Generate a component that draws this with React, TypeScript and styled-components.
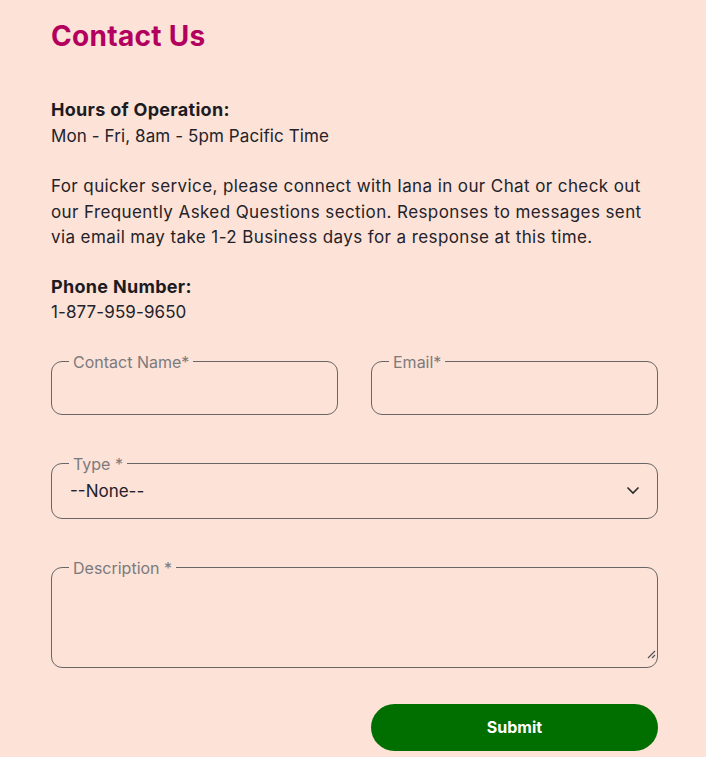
import React from "react";
import styled, { createGlobalStyle } from "styled-components";

const Global = createGlobalStyle`
  html, body { margin: 0; padding: 0; background: #fce2d7; }
  body { font-family: Inter, "Noto Sans", sans-serif; color: #1f1f23; }
`;

const Page = styled.div`
  padding: 18px 48px 8px 51px;
  width: 607px;
  background: #fce2d7;
`;

const Title = styled.h1`
  margin: 0 0 43px;
  font-size: 28px;
  line-height: 36px;
  font-weight: 700;
  color: #b3005e;
  letter-spacing: 0.3px;
`;

const Block = styled.div<{ $wide?: boolean }>`
  margin-bottom: ${(p) => (p.$wide ? "23px" : "25px")};
  font-size: 17px;
  line-height: 25.5px;
  color: #24222a;
  letter-spacing: ${(p) => (p.$wide ? "0.4px" : "0.1px")};
`;

const Heading = styled.div`
  font-weight: 700;
  font-size: 18px;
  line-height: 26.5px;
  letter-spacing: 0.3px;
  color: #1d1b22;
`;

const Form = styled.form`
  display: flex;
  flex-direction: column;
  gap: 41px;
  margin-top: 28px;
`;

const Row = styled.div`
  display: grid;
  grid-template-columns: 1fr 1fr;
  column-gap: 33px;
`;

const Field = styled.fieldset<{ $h: number }>`
  margin: 0;
  padding: 0 16px 0 17px;
  border: 1px solid #6a6666;
  border-radius: 11px;
  height: ${(p) => p.$h}px;
  box-sizing: border-box;
  position: relative;
  min-width: 0;
`;

const Legend = styled.legend`
  padding: 0 4px;
  font-size: 16px;
  line-height: 16px;
  color: #7c7a7c;
`;

const Input = styled.input`
  border: none;
  background: transparent;
  outline: none;
  width: 100%;
  height: 36px;
  font: inherit;
  font-size: 17px;
  padding: 0;
`;

const SelectBox = styled.div`
  display: flex;
  align-items: center;
  justify-content: space-between;
  height: 38px;
  font-size: 17px;
  color: #22202a;
  padding-left: 1px;
  padding-right: 1px;
`;

const TextArea = styled.div`
  height: 84px;
`;

const Grip = styled.svg`
  position: absolute;
  right: 1px;
  bottom: 1px;
`;

const ButtonRow = styled.div`
  display: grid;
  grid-template-columns: 1fr 1fr;
  column-gap: 33px;
  margin-top: -5px;
`;

const Submit = styled.button`
  grid-column: 2;
  height: 47px;
  border: none;
  border-radius: 24px;
  background: #006f00;
  color: #fff;
  font-family: Inter, sans-serif;
  font-weight: 700;
  font-size: 16px;
`;

export default function App() {
  return (
    <Page>
      <Global />
      <Title>Contact Us</Title>
      <Block>
        <Heading>Hours of Operation:</Heading>
        Mon - Fri, 8am - 5pm Pacific Time
      </Block>
      <Block $wide>
        For quicker service, please connect with Iana in our Chat or check out our Frequently Asked
        Questions section. Responses to messages sent via email may take 1-2 Business days for a
        response at this time.
      </Block>
      <Block>
        <Heading>Phone Number:</Heading>
        1-877-959-9650
      </Block>
      <Form>
        <Row>
          <Field $h={61}>
            <Legend>Contact Name*</Legend>
            <Input />
          </Field>
          <Field $h={61}>
            <Legend>Email*</Legend>
            <Input />
          </Field>
        </Row>
        <Field $h={63}>
          <Legend>Type *</Legend>
          <SelectBox>
            <span>--None--</span>
            <svg width="14" height="9" viewBox="0 0 14 9">
              <path d="M1.5 1.5 L7 7 L12.5 1.5" fill="none" stroke="#2a2a2a" strokeWidth="1.6" />
            </svg>
          </SelectBox>
        </Field>
        <Field $h={108}>
          <Legend>Description *</Legend>
          <TextArea />
          <Grip width="10" height="10" viewBox="0 0 10 10">
            <path d="M9 2 L2 9 M9 6 L6 9" stroke="#555" strokeWidth="1.2" />
          </Grip>
        </Field>
        <ButtonRow>
          <Submit type="button">Submit</Submit>
        </ButtonRow>
      </Form>
    </Page>
  );
}
